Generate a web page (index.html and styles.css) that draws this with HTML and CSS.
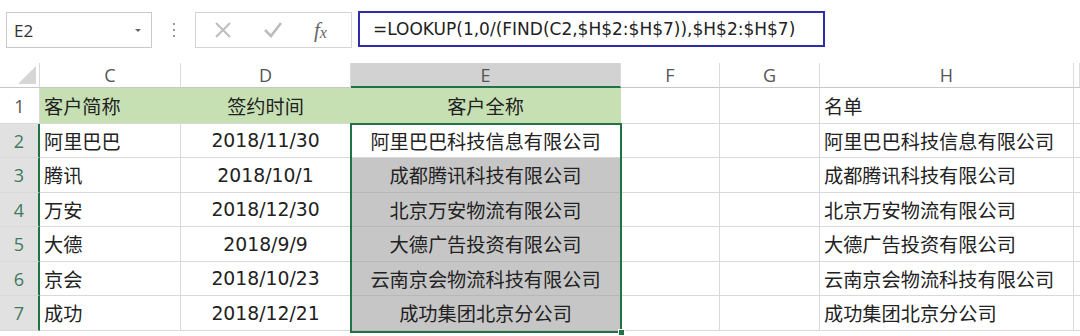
FILE: index.html
```html
<!DOCTYPE html>
<html lang="zh">
<head>
<meta charset="utf-8">
<title>Excel LOOKUP</title>
<link rel="stylesheet" href="styles.css">
</head>
<body>
<div class="fbar">
  <div class="namebox"><span class="ref">E2</span><span class="caret"></span></div>
  <div class="dots"><i></i><i></i><i></i></div>
  <div class="fxbox">
    <svg class="ic" width="20" height="20" viewBox="0 0 20 20"><path d="M3 3 L17 17 M17 3 L3 17" stroke="#bdbdbd" stroke-width="2" fill="none"/></svg>
    <svg class="ic" width="22" height="20" viewBox="0 0 22 20"><path d="M3 10 L9 16 L19 3" stroke="#bdbdbd" stroke-width="2.6" fill="none"/></svg>
    <span class="fx">f<sub>x</sub></span>
  </div>
  <div class="formula">=LOOKUP(1,0/(FIND(C2,$H$2:$H$7)),$H$2:$H$7)</div>
</div>
<div class="sheet">
  <div class="corner"><span class="tri"></span></div>
  <div class="ch">C</div><div class="ch">D</div><div class="ch ch-sel">E</div><div class="ch">F</div><div class="ch">G</div><div class="ch">H</div><div class="ch"></div>

  <div class="rh">1</div>
  <div class="c g left">客户简称</div><div class="c g">签约时间</div><div class="c g">客户全称</div><div class="c"></div><div class="c"></div><div class="c left">名单</div><div class="c"></div>

  <div class="rh sel">2</div>
  <div class="c left">阿里巴巴</div><div class="c num">2018/11/30</div><div class="c">阿里巴巴科技信息有限公司</div><div class="c"></div><div class="c"></div><div class="c left">阿里巴巴科技信息有限公司</div><div class="c"></div>

  <div class="rh sel">3</div>
  <div class="c left">腾讯</div><div class="c num">2018/10/1</div><div class="c s">成都腾讯科技有限公司</div><div class="c"></div><div class="c"></div><div class="c left">成都腾讯科技有限公司</div><div class="c"></div>

  <div class="rh sel">4</div>
  <div class="c left">万安</div><div class="c num">2018/12/30</div><div class="c s">北京万安物流有限公司</div><div class="c"></div><div class="c"></div><div class="c left">北京万安物流有限公司</div><div class="c"></div>

  <div class="rh sel">5</div>
  <div class="c left">大德</div><div class="c num">2018/9/9</div><div class="c s">大德广告投资有限公司</div><div class="c"></div><div class="c"></div><div class="c left">大德广告投资有限公司</div><div class="c"></div>

  <div class="rh sel">6</div>
  <div class="c left">京会</div><div class="c num">2018/10/23</div><div class="c s">云南京会物流科技有限公司</div><div class="c"></div><div class="c"></div><div class="c left">云南京会物流科技有限公司</div><div class="c"></div>

  <div class="rh sel">7</div>
  <div class="c left">成功</div><div class="c num">2018/12/21</div><div class="c s">成功集团北京分公司</div><div class="c"></div><div class="c"></div><div class="c left">成功集团北京分公司</div><div class="c"></div>

  <div class="selbox"></div>
  <div class="handle"></div>
</div>
</body>
</html>
```
FILE: styles.css
```css
* { box-sizing: border-box; }
html, body { margin: 0; padding: 0; background: #fff; }
body {
  width: 1080px; height: 336px; overflow: hidden;
  font-family: "Noto Sans CJK SC", "Noto Sans", sans-serif;
  color: #222;
}
.fbar {
  height: 63px;
  display: flex;
  align-items: flex-start;
  padding-top: 12px;
}
.namebox {
  margin-left: 6px;
  width: 146px; height: 36px;
  border: 1px solid #c9c9c9;
  display: flex; align-items: center; justify-content: space-between;
  padding: 0 10px 0 7px;
  font-family: "Open Sans", "Noto Sans", sans-serif;
  font-size: 17px; color: #333;
}
.caret {
  width: 0; height: 0;
  border-left: 3px solid transparent; border-right: 3px solid transparent;
  border-top: 3px solid #666;
}
.dots {
  width: 43px; height: 36px;
  display: flex; flex-direction: column; align-items: center; justify-content: center; gap: 4px;
}
.dots i { display: block; width: 2px; height: 2px; background: #999; }
.fxbox {
  width: 157px; height: 36px;
  border: 1px solid #d4d4d4;
  display: flex; align-items: center;
  padding-left: 17px;
}
.fxbox .ic:nth-child(1) { margin-right: 29px; }
.fxbox .ic:nth-child(2) { margin-right: 30px; }
.fx {
  font-family: "Liberation Serif", serif; font-style: italic;
  font-size: 21px; color: #666;
}
.fx sub { font-size: 16px; vertical-align: -1px; }
.formula {
  margin-left: 6px;
  width: 467px; height: 36px;
  margin-top: -1px;
  border: 2px solid #2e2ea8;
  padding-left: 13px;
  display: flex; align-items: center;
  font-family: "DejaVu Sans", "Noto Sans", sans-serif;
  font-size: 17px; color: #222;
}
.sheet {
  position: relative;
  display: grid;
  grid-template-columns: 40px 141px 170px 270px 99px 100px 254px 6px;
  grid-template-rows: 25px 36px 34px 35px 34px 35px 34px 35px;
}
.corner { border-right: 1px solid #d9d9d9; border-bottom: 1px solid #c8c8c8; position: relative; }
.tri {
  position: absolute; right: 3px; bottom: 3px;
  width: 0; height: 0;
  border-left: 18px solid transparent;
  border-bottom: 18px solid #d6d6d6;
}
.ch {
  border-right: 1px solid #dcdcdc;
  border-bottom: 1px solid #c8c8c8;
  display: flex; align-items: center; justify-content: center;
  font-family: "Open Sans", "Noto Sans", sans-serif;
  font-size: 18px; color: #555;
}
.ch-sel { background: #d2d2d2; border-bottom: 2px solid #217346; }
.rh {
  border-right: 1px solid #d9d9d9;
  border-bottom: 1px solid #d9d9d9;
  display: flex; align-items: center; justify-content: center;
  font-family: "Open Sans", "Noto Sans", sans-serif;
  font-size: 18px; color: #555;
}
.rh.sel { background: #e1e1e1; color: #3f7a5c; border-right: 2px solid #217346; }
.c {
  border-right: 1px solid #d9d9d9;
  border-bottom: 1px solid #d9d9d9;
  display: flex; align-items: center; justify-content: center;
  font-size: 19.2px; white-space: nowrap; overflow: hidden;
  padding: 0 4px;
}
.c.num { font-family: "DejaVu Sans", "Noto Sans", sans-serif; font-size: 18.8px; }
.c.left { justify-content: flex-start; }
.c.g { background: #c6e0b4; border-right-color: #c6e0b4; }
.c.s { background: #c6c6c6; border-bottom-color: #b8b8b8; }
.selbox {
  position: absolute;
  left: 350px; top: 60px; width: 272px; height: 210px;
  border: 2px solid #217346;
  pointer-events: none;
}
.handle {
  position: absolute;
  left: 618px; top: 266px; width: 7px; height: 7px;
  background: #217346; border: 1px solid #fff;
}
```
